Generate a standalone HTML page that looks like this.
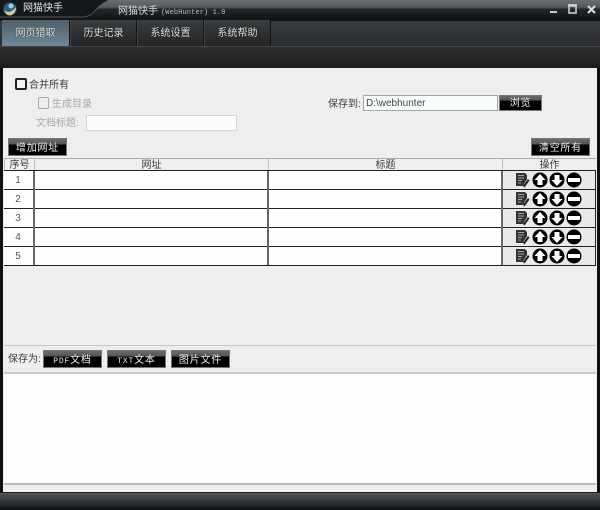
<!DOCTYPE html>
<html><head><meta charset="utf-8"><style>
html,body{margin:0;padding:0;width:600px;height:510px;overflow:hidden;background:#111}
body{font:10px "Liberation Sans","WenQuanYi Zen Hei","Noto Sans CJK SC",sans-serif;position:relative;color:#333}
div,span{position:absolute;box-sizing:border-box;white-space:nowrap}
.tab{top:20px;height:26px;width:67px;text-align:center;line-height:28px;color:#e0e0e0;border-right:1px solid #111;border-left:1px solid #444;background:linear-gradient(#3a3c3e,#232527);text-shadow:0 0 1px #000}
.btn{background:linear-gradient(#6a6a6a 0,#555 33%,#000 34%,#000 100%);border:1px solid #777;color:#eee;text-align:center;line-height:19px;height:18px;width:59px;letter-spacing:.8px}
.l{color:#3c3c3c}.d{color:#a8a8a8}
.hd{top:158px;height:13px;background:#efefee;border-top:1px solid #a9b0b3;border-bottom:1px solid #888;text-align:center;line-height:14px;border-left:1px solid #bbb;color:#3c3c3c}
.row{left:4px;width:592px;height:19px;background:#fdfefd;border-bottom:1px solid #222}
.v{top:171px;height:94px;width:2px;background:#666}
.n{left:0;width:28px;text-align:center;line-height:20px;color:#555}
.ops{left:498px;width:94px;height:18px;background:#e9e9e7}
.c{letter-spacing:-1.5px}
svg{position:absolute}
</style></head><body>
<div style="left:0;top:0;width:600px;height:20px;background:linear-gradient(#6b6f70 0,#54585a 36%,#22282b 46%,#0e1315 100%)"></div>
<svg style="left:0;top:0" width="600" height="20"><path d="M0 0H108Q100 4 94 12Q90 17 80 17H0Z" fill="#14181a"/><path d="M0 17H80Q90 17 94 12Q100 4 108 1" fill="none" stroke="#555" stroke-width="1"/><circle cx="10" cy="9" r="6.500" fill="#2f5f86"/><path d="M4 10Q10 15 16 7Q16 14 10 15.500Q5 15 4 10Z" fill="#d9c98c"/><circle cx="11" cy="6" r="2.500" fill="#b0c8d6"/>
<path d="M550 12h7" stroke="#ccc" stroke-width="2"/><rect x="569" y="6" width="7" height="7" fill="none" stroke="#ccc" stroke-width="1.6"/><path d="M568 5h9" stroke="#ccc" stroke-width="2"/><path d="M588 6l7 7M595 6l-7 7" stroke="#ddd" stroke-width="2"/></svg>
<span style="left:23px;top:2px;color:#e4e4e4;line-height:14px;">网猫快手</span>
<span style="left:118px;top:4px;color:#ddd;line-height:15px">网猫快手<span style="position:static;margin-left:3px;font-size:7px;letter-spacing:.1px;font-family:'Liberation Mono',monospace;color:#bbb">(WebHunter) 1.0</span></span>
<div style="left:0;top:20px;width:600px;height:26px;background:linear-gradient(#3a3d3f,#2a2c2e);border-top:1px solid #111"></div>
<div style="left:0;top:46px;width:600px;height:22px;background:linear-gradient(#2e3031,#1c1d1e);border-top:1px solid #444"></div>
<div class="tab" style="left:2px;background:linear-gradient(#4f5f69,#6f8795);color:#e4e8ea;border:0;border-right:1px solid #111;width:68px;text-shadow:0 0 1px #000">网页猎取</div>
<div class="tab" style="left:70px">历史记录</div>
<div class="tab" style="left:137px">系统设置</div>
<div class="tab" style="left:204px">系统帮助</div>

<div style="left:3px;top:68px;width:594px;height:424px;background:#eeeeec"></div>
<div style="left:15px;top:78px;width:12px;height:12px;border:2px solid #222;border-radius:2px;background:#f4f4f4"></div>
<span class="l" style="left:29px;top:78px;line-height:15px">合并所有</span>
<div style="left:38px;top:97px;width:11px;height:12px;border:1px solid #aaa;border-radius:2px;background:#eee"></div>
<span class="d" style="left:52px;top:97px;line-height:15px">生成目录</span>
<span class="d" style="left:36px;top:116px;line-height:15px">文档标题<span class="c" style="position:static">:</span></span>
<div style="left:86px;top:115px;width:151px;height:16px;background:#fbfdfd;border:1px solid #cfd5d8"></div>
<span class="l" style="left:328px;top:97px;line-height:15px">保存到<span class="c" style="position:static">:</span></span>
<div style="left:363px;top:95px;width:135px;height:16px;background:#fbfdfb;border:1px solid #9aa;line-height:15px;padding-left:2px;color:#444;font-size:10px">D:\webhunter</div>
<div class="btn" style="left:499px;top:95px;width:43px;height:16px;line-height:16px">浏览</div>
<div class="btn" style="left:8px;top:138px">增加网址</div>
<div class="btn" style="left:531px;top:138px">清空所有</div>

<div class="hd" style="left:4px;width:30px">序号</div>
<div class="hd" style="left:34px;width:234px">网址</div>
<div class="hd" style="left:268px;width:234px">标题</div>
<div class="hd" style="left:502px;width:94px">操作</div>

<div class="row" style="top:171px"><span class="n">1</span><div class="ops"></div></div>
<div class="row" style="top:190px"><span class="n">2</span><div class="ops"></div></div>
<div class="row" style="top:209px"><span class="n">3</span><div class="ops"></div></div>
<div class="row" style="top:228px"><span class="n">4</span><div class="ops"></div></div>
<div class="row" style="top:247px"><span class="n">5</span><div class="ops"></div></div>
<div style="left:4px;top:170px;width:592px;height:1px;background:#222"></div>
<div class="v" style="left:33px"></div><div class="v" style="left:267px"></div><div class="v" style="left:501px"></div><div class="v" style="left:595px;width:1px;background:#222"></div>

<svg style="left:0;top:0" width="600" height="270">
<defs><g id="o">
<path d="M516 173h9l2 2v4l-3 5-1 2h-7z" fill="#333"/>
<path d="M518 175.500h6M518 178h6M518 180.500h4M518 183h3" stroke="#ccc" stroke-width=".8"/>
<path d="M523 186l5-7 1.500 1.500-5 7z" fill="#222"/>
<circle cx="540" cy="180" r="7.500" fill="#000"/><path d="M540 174l5.500 6h-3v5h-5v-5h-3z" fill="#fff"/>
<circle cx="557" cy="180" r="7.500" fill="#000"/><path d="M557 186l-5.500-6h3v-5h5v5h3z" fill="#fff"/>
<circle cx="574" cy="180" r="7.500" fill="#000"/><rect x="568" y="178" width="12" height="4" fill="#fff"/>
</g></defs>
<use href="#o"/><use href="#o" y="19"/><use href="#o" y="38"/><use href="#o" y="57"/><use href="#o" y="76"/>
</svg>

<div style="left:4px;top:345px;width:592px;height:1px;background:#c4c8c8"></div>
<span class="l" style="left:8px;top:352px;line-height:15px">保存为<span class="c" style="position:static">:</span></span>
<div class="btn" style="left:43px;top:350px"><span style="position:static;font-family:'Liberation Mono',monospace;font-size:8px">PDF</span>文档</div>
<div class="btn" style="left:107px;top:350px"><span style="position:static;font-family:'Liberation Mono',monospace;font-size:8px">TXT</span>文本</div>
<div class="btn" style="left:171px;top:350px">图片文件</div>
<div style="left:4px;top:372px;width:592px;height:113px;background:#fcfefc;border-top:2px solid #c6caca;border-bottom:2px solid #b8bcbc"></div>

<div style="left:0;top:492px;width:600px;height:18px;background:linear-gradient(#505456 0,#383d40 40%,#0b1114 100%);border-top:1px solid #222"></div>
</body></html>
